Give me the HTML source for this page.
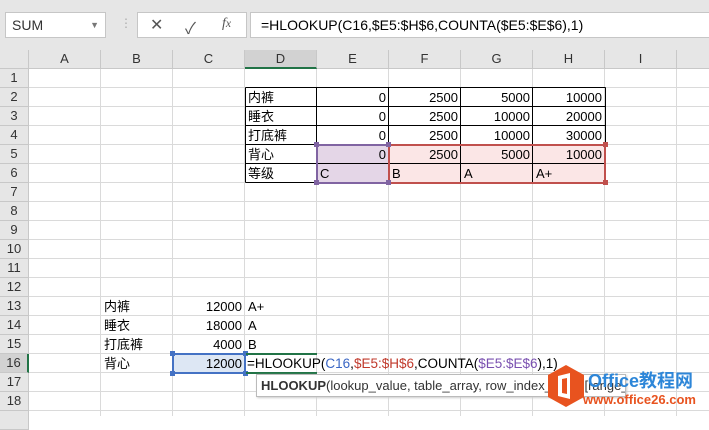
<!DOCTYPE html>
<html><head><meta charset="utf-8"><style>
*{margin:0;padding:0;box-sizing:border-box}
body{width:709px;height:416px;overflow:hidden;background:#fff;font-family:"Liberation Sans","Noto Sans CJK SC",sans-serif;font-size:13px;color:#000;position:relative}
.a{position:absolute;white-space:nowrap}
.top{left:0;top:0;width:709px;height:50px;background:#e6e6e6}
.box{background:#fff;border:1px solid #c6c6c6;height:26px;top:12px}
.grid{left:29px;top:69px;width:680px;height:347px;background:
repeating-linear-gradient(to right,transparent 0 71px,#dadada 71px 72px),
repeating-linear-gradient(to bottom,transparent 0 18px,#dadada 18px 19px)}
.hd{top:50px;height:19px;background:#e6e6e6;border-right:1px solid #c8c8c8;border-bottom:1px solid #c8c8c8;text-align:center;line-height:18px;color:#333;font-size:13px}
.rh{left:0;width:29px;height:19px;background:#e6e6e6;border-right:1px solid #c8c8c8;border-bottom:1px solid #c8c8c8;text-align:center;line-height:18px;color:#333}
.c{height:19px;line-height:19px;padding:0 3px}
.r{text-align:right}
</style></head><body>
<div class="a top"></div>
<div class="a box" style="left:5px;width:101px;padding-left:6px;line-height:24px;font-size:14px;color:#333">SUM<span style="position:absolute;right:6px;top:0;font-size:9px;color:#777">▼</span></div>
<div class="a" style="left:120px;top:16px;color:#aaa;font-size:12px">⋮</div>
<div class="a box" style="left:137px;width:110px">
<span style="position:absolute;left:12px;top:2px;font-size:16px;color:#555">✕</span>
<span style="position:absolute;left:47px;top:2px;font-size:16px;color:#555">✓</span>
<span style="position:absolute;left:84px;top:3px;font-size:14px;color:#555;font-style:italic;font-family:'Liberation Serif',serif">f<small>x</small></span></div>
<div class="a box" style="left:250px;width:470px;padding-left:10px;line-height:24px;font-size:14px">=HLOOKUP(C16,$E5:$H$6,COUNTA($E5:$E$6),1)</div>

<div class="a grid"></div>
<div class="a hd" style="left:0;width:29px"></div>
<div class="a hd" style="left:29px;width:72px">A</div>
<div class="a hd" style="left:101px;width:72px">B</div>
<div class="a hd" style="left:173px;width:72px">C</div>
<div class="a hd" style="left:245px;width:72px;background:#d2d2d2;border-bottom:2px solid #217346">D</div>
<div class="a hd" style="left:317px;width:72px">E</div>
<div class="a hd" style="left:389px;width:72px">F</div>
<div class="a hd" style="left:461px;width:72px">G</div>
<div class="a hd" style="left:533px;width:72px">H</div>
<div class="a hd" style="left:605px;width:72px">I</div>
<div class="a hd" style="left:677px;width:40px"></div>

<div class="a rh" style="top:69px">1</div><div class="a rh" style="top:88px">2</div><div class="a rh" style="top:107px">3</div><div class="a rh" style="top:126px">4</div><div class="a rh" style="top:145px">5</div><div class="a rh" style="top:164px">6</div><div class="a rh" style="top:183px">7</div><div class="a rh" style="top:202px">8</div><div class="a rh" style="top:221px">9</div><div class="a rh" style="top:240px">10</div><div class="a rh" style="top:259px">11</div><div class="a rh" style="top:278px">12</div><div class="a rh" style="top:297px">13</div><div class="a rh" style="top:316px">14</div><div class="a rh" style="top:335px">15</div><div class="a rh" style="top:354px;background:#d2d2d2;border-right:2px solid #217346">16</div><div class="a rh" style="top:373px">17</div><div class="a rh" style="top:392px">18</div><div class="a rh" style="top:411px"></div>

<div class="a" style="left:317px;top:145px;width:72px;height:38px;background:#e4d6e7"></div>
<div class="a" style="left:389px;top:145px;width:216px;height:38px;background:#fbe6e6"></div>
<div class="a" style="left:173px;top:354px;width:72px;height:19px;background:#dde7f4"></div>
<svg class="a" style="left:0;top:0" width="709" height="416">
<g stroke="#000" stroke-width="1" shape-rendering="crispEdges">
<line x1="245.5" y1="87.5" x2="605.5" y2="87.5"/><line x1="245.5" y1="106.5" x2="605.5" y2="106.5"/><line x1="245.5" y1="125.5" x2="605.5" y2="125.5"/><line x1="245.5" y1="144.5" x2="605.5" y2="144.5"/><line x1="245.5" y1="163.5" x2="605.5" y2="163.5"/><line x1="245.5" y1="182.5" x2="605.5" y2="182.5"/>
<line x1="245.5" y1="87.5" x2="245.5" y2="182.5"/><line x1="316.5" y1="87.5" x2="316.5" y2="182.5"/><line x1="388.5" y1="87.5" x2="388.5" y2="182.5"/><line x1="460.5" y1="87.5" x2="460.5" y2="182.5"/><line x1="532.5" y1="87.5" x2="532.5" y2="182.5"/><line x1="605.5" y1="87.5" x2="605.5" y2="182.5"/>
</g>
<rect x="317" y="145" width="72" height="38" fill="none" stroke="#8064a2" stroke-width="2"/>
<rect x="389" y="145" width="216" height="38" fill="none" stroke="#c0504d" stroke-width="2"/>
<g fill="#8064a2"><rect x="314" y="142" width="5" height="5"/><rect x="386" y="142" width="5" height="5"/><rect x="314" y="180" width="5" height="5"/><rect x="386" y="180" width="5" height="5"/></g>
<g fill="#c0504d"><rect x="603" y="142" width="5" height="5"/><rect x="603" y="180" width="5" height="5"/></g>
<rect x="173" y="354" width="72" height="19" fill="none" stroke="#4472c4" stroke-width="2"/>
<g fill="#4472c4"><rect x="170" y="351" width="5" height="5"/><rect x="243" y="351" width="5" height="5"/><rect x="170" y="371" width="5" height="5"/><rect x="243" y="371" width="5" height="5"/></g>
<line x1="246" y1="354" x2="317" y2="354" stroke="#217346" stroke-width="2"/><line x1="246" y1="373" x2="317" y2="373" stroke="#217346" stroke-width="2"/>
</svg>

<div class="a c" style="left:245px;top:88px">内裤</div><div class="a c" style="left:245px;top:107px">睡衣</div><div class="a c" style="left:245px;top:126px">打底裤</div><div class="a c" style="left:245px;top:145px">背心</div><div class="a c" style="left:245px;top:164px">等级</div>
<div class="a c r" style="left:317px;width:72px;top:88px">0</div><div class="a c r" style="left:389px;width:72px;top:88px">2500</div><div class="a c r" style="left:461px;width:72px;top:88px">5000</div><div class="a c r" style="left:533px;width:72px;top:88px">10000</div>
<div class="a c r" style="left:317px;width:72px;top:107px">0</div><div class="a c r" style="left:389px;width:72px;top:107px">2500</div><div class="a c r" style="left:461px;width:72px;top:107px">10000</div><div class="a c r" style="left:533px;width:72px;top:107px">20000</div>
<div class="a c r" style="left:317px;width:72px;top:126px">0</div><div class="a c r" style="left:389px;width:72px;top:126px">2500</div><div class="a c r" style="left:461px;width:72px;top:126px">10000</div><div class="a c r" style="left:533px;width:72px;top:126px">30000</div>
<div class="a c r" style="left:317px;width:72px;top:145px">0</div><div class="a c r" style="left:389px;width:72px;top:145px">2500</div><div class="a c r" style="left:461px;width:72px;top:145px">5000</div><div class="a c r" style="left:533px;width:72px;top:145px">10000</div>
<div class="a c" style="left:317px;top:164px">C</div><div class="a c" style="left:389px;top:164px">B</div><div class="a c" style="left:461px;top:164px">A</div><div class="a c" style="left:533px;top:164px">A+</div>

<div class="a c" style="left:101px;top:297px">内裤</div><div class="a c" style="left:101px;top:316px">睡衣</div><div class="a c" style="left:101px;top:335px">打底裤</div><div class="a c" style="left:101px;top:354px">背心</div>
<div class="a c r" style="left:173px;width:72px;top:297px">12000</div><div class="a c r" style="left:173px;width:72px;top:316px">18000</div><div class="a c r" style="left:173px;width:72px;top:335px">4000</div><div class="a c r" style="left:173px;width:72px;top:354px">12000</div>
<div class="a c" style="left:245px;top:297px">A+</div><div class="a c" style="left:245px;top:316px">A</div><div class="a c" style="left:245px;top:335px">B</div>
<div class="a c" style="left:245px;top:354px;font-size:13.5px;padding-left:2px">=HLOOKUP(<span style="color:#3a66c4">C16</span>,<span style="color:#c0392b">$E5:$H$6</span>,COUNTA(<span style="color:#7a50b0">$E5:$E$6</span>),1)</div>

<div class="a" style="left:256px;top:374px;width:370px;height:23px;background:#fff;border:1px solid #bbb;box-shadow:1px 1px 2px #ccc;padding:3px 4px;font-size:13px;color:#333;overflow:hidden"><b>HLOOKUP</b>(lookup_value, table_array, row_index_num, [range_lookup])</div>
<svg class="a" style="left:548px;top:365px" width="36" height="42" viewBox="0 0 36 42"><polygon points="18,0 36,10 36,32 18,42 0,32 0,10" fill="#e8531f"/><path d="M10 11 L22 8 L22 34 L10 31 Z M14 14 V28 L19 29 V13 Z" fill="#fff" fill-rule="evenodd"/></svg>
<div class="a" style="left:588px;top:367px;font-size:18px;font-weight:bold;color:#2d86d8">Office教程网</div>
<div class="a" style="left:583px;top:392px;font-size:13px;font-weight:bold;color:#e8531f">www.office26.com</div>
</body></html>
